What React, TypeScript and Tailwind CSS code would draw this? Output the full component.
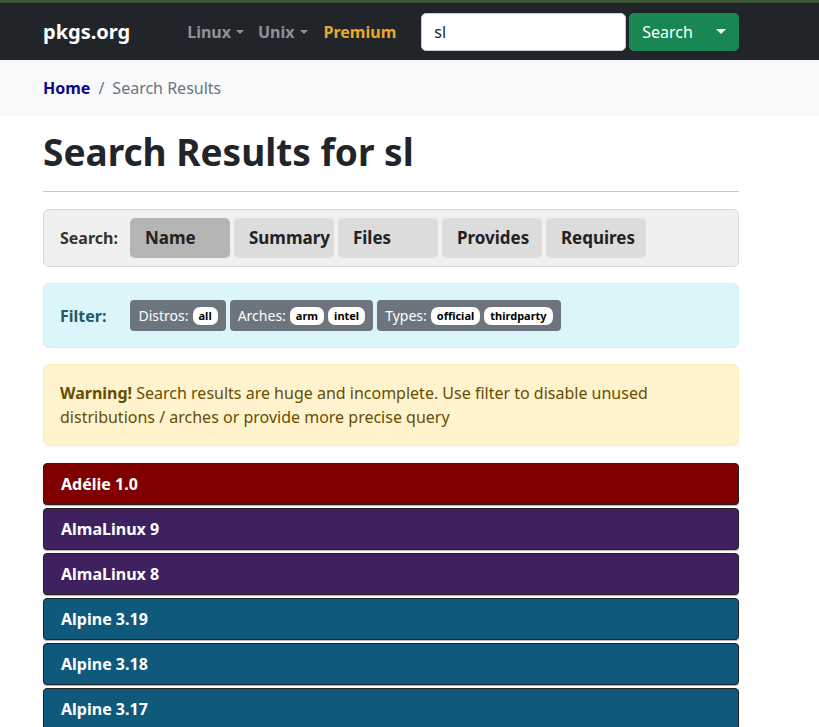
import React from "react";

const Caret = () => (
  <span className="ml-[5px] inline-block h-0 w-0 border-x-[4px] border-t-[4px] border-x-transparent border-t-current align-middle" />
);

const results = [
  { name: "Adélie 1.0", color: "bg-[#800000]" },
  { name: "AlmaLinux 9", color: "bg-[#40215f]" },
  { name: "AlmaLinux 8", color: "bg-[#40215f]" },
  { name: "Alpine 3.19", color: "bg-[#0f5a7c]" },
  { name: "Alpine 3.18", color: "bg-[#0f5a7c]" },
  { name: "Alpine 3.17", color: "bg-[#0f5a7c]" },
  { name: "Alpine 3.16", color: "bg-[#0f5a7c]" },
];

const tabs = ["Name", "Summary", "Files", "Provides", "Requires"];

const Pill = ({ children }: { children: React.ReactNode }) => (
  <span className="ml-[4px] rounded-[7px] bg-white px-[6px] py-[1px] text-[11px] font-bold leading-[16px] text-black">
    {children}
  </span>
);

export default function App() {
  return (
    <div className="min-h-screen bg-white font-['Noto_Sans',sans-serif] text-[#212529]">
      <div className="h-[3px] bg-[#3b5536]" />
      <nav className="flex h-[57px] items-center bg-[#212529] pl-[43px]">
        <span className="text-[20px] font-bold text-white">pkgs.org</span>
        <span className="ml-[57px] flex items-center text-[16px] font-bold text-[#8c9298]">
          Linux
          <Caret />
        </span>
        <span className="ml-[14px] flex items-center text-[16px] font-bold text-[#8c9298]">
          Unix
          <Caret />
        </span>
        <span className="ml-[16px] text-[16px] font-bold text-[#e6a92a]">Premium</span>
        <div className="ml-[25px] flex h-[38px] w-[205px] items-center rounded-[5px] border border-[#ccc] bg-white px-[12px] text-[16px] text-[#212529]">
          sl
        </div>
        <div className="ml-[3px] flex h-[38px] w-[110px] items-center justify-between rounded-[5px] bg-[#198754] pl-[13px] pr-[13px] text-[16px] text-white">
          Search
          <span className="inline-block h-0 w-0 border-x-[5px] border-t-[5px] border-x-transparent border-t-white" />
        </div>
      </nav>
      <div className="flex h-[56px] items-center bg-[#f8f9fa] pl-[43px] text-[16px]">
        <span className="font-bold text-[#0b0a8c]">Home</span>
        <span className="px-[8px] text-[#6c757d]">/</span>
        <span className="text-[#6c757d]">Search Results</span>
      </div>
      <main className="ml-[43px] w-[696px]">
        <h1 className="mt-[12px] text-[37px] font-bold leading-[48px] text-[#212529]">Search Results for sl</h1>
        <hr className="mt-[15px] border-t border-[#c8c8c8]" />
        <div className="mt-[17px] flex h-[58px] items-center rounded-[6px] border border-[#d9d9d9] bg-[#f0f0f0] pl-[16px]">
          <span className="mr-[12px] text-[16px] font-bold text-[#333]">Search:</span>
          <div className="flex gap-[4px]">
            {tabs.map((t, i) => (
              <div
                key={t}
                className={`flex h-[40px] w-[100px] items-center rounded-[5px] pl-[15px] text-[17px] font-bold text-[#222] ${
                  i === 0 ? "bg-[#b5b5b5]" : "bg-[#dcdcdc]"
                }`}
              >
                {t}
              </div>
            ))}
          </div>
        </div>
        <div className="mt-[16px] flex h-[65px] items-center rounded-[6px] border border-[#c9f0f9] bg-[#dcf5fb] pl-[16px]">
          <span className="mr-[24px] text-[16px] font-bold text-[#235a66]">Filter:</span>
          <div className="flex gap-[4px] text-[14px] text-white">
            <div className="flex h-[31px] items-center rounded-[4px] bg-[#6c757d] px-[8px]">
              Distros:<Pill>all</Pill>
            </div>
            <div className="flex h-[31px] items-center rounded-[4px] bg-[#6c757d] px-[8px]">
              Arches:<Pill>arm</Pill>
              <Pill>intel</Pill>
            </div>
            <div className="flex h-[31px] items-center rounded-[4px] bg-[#6c757d] px-[8px]">
              Types:<Pill>official</Pill>
              <Pill>thirdparty</Pill>
            </div>
          </div>
        </div>
        <div className="mt-[16px] rounded-[6px] border border-[#ffecb5] bg-[#fff3cd] px-[16px] py-[16px] text-[16px] leading-[24px] text-[#664d03]">
          <b>Warning!</b> Search results are huge and incomplete. Use filter to disable unused distributions / arches or
          provide more precise query
        </div>
        <div className="mt-[17px] flex flex-col gap-[3px]">
          {results.map((r) => (
            <div
              key={r.name}
              className={`flex h-[42px] items-center rounded-[4px] border border-[#222] pl-[17px] text-[16px] font-bold text-white shadow-[0_1px_1px_rgba(0,0,0,0.3)] ${r.color}`}
            >
              {r.name}
            </div>
          ))}
        </div>
      </main>
    </div>
  );
}
